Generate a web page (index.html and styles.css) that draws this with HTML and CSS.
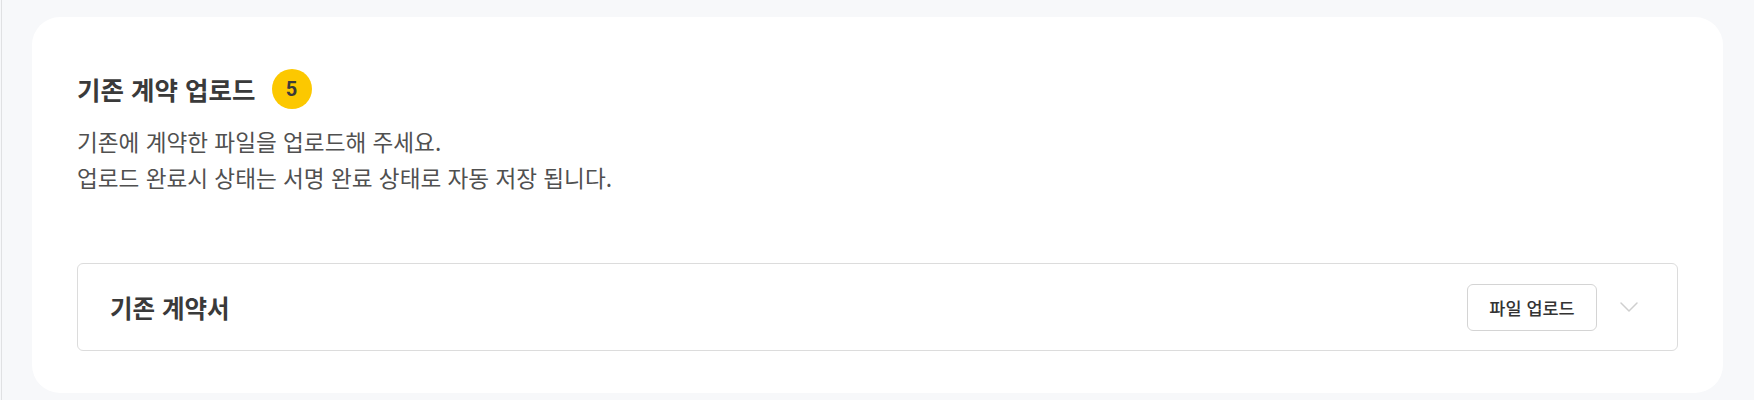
FILE: index.html
```html
<!DOCTYPE html>
<html lang="ko">
<head>
<meta charset="utf-8">
<title>기존 계약 업로드</title>
<link rel="stylesheet" href="styles.css">
</head>
<body>
<div class="page">
  <section class="card">
    <div class="title-row">
      <h2 class="title">기존 계약 업로드</h2>
      <span class="badge">5</span>
    </div>
    <p class="desc">기존에 계약한 파일을 업로드해 주세요.<br>업로드 완료시 상태는 서명 완료 상태로 자동 저장 됩니다.</p>
    <div class="panel">
      <div class="panel-title">기존 계약서</div>
      <div class="panel-actions">
        <button class="btn" type="button">파일 업로드</button>
        <span class="chevron">
          <svg width="20" height="12" viewBox="0 0 20 12"><path d="M2 2 L10 10 L18 2" fill="none" stroke="#cfcfcf" stroke-width="1.5" stroke-linecap="round" stroke-linejoin="round"/></svg>
        </span>
      </div>
    </div>
  </section>
</div>
</body>
</html>
```
FILE: styles.css
```css
* { box-sizing: border-box; }
html, body { margin: 0; padding: 0; }
body {
  background: #f7f8fa;
  font-family: "Noto Sans CJK KR", "Noto Sans", sans-serif;
  color: #333;
}
.page {
  margin-left: 1px;
  border-left: 1px solid #e0e1e3;
  min-height: 400px;
  padding: 17px 31px 7px 30px;
}
.card {
  background: #fff;
  border-radius: 28px;
  padding: 52px 45px 42px 45px;
}
.title-row {
  display: flex;
  align-items: center;
  height: 40px;
}
.title {
  margin: 0;
  font-size: 25.5px;
  font-weight: 700;
  color: #3a3a3a;
  line-height: 1;
}
.badge {
  margin-left: 16px;
  width: 40px;
  height: 40px;
  border-radius: 50%;
  background: #fcc800;
  color: #3a3a3a;
  font-family: "Roboto", "Noto Sans", sans-serif;
  font-weight: 700;
  font-size: 20px;
  display: flex;
  align-items: center;
  justify-content: center;
}
.desc {
  margin: 15px 0 0 0;
  font-size: 22.6px;
  line-height: 36px;
  color: #505050;
}
.panel {
  margin-top: 67px;
  height: 88px;
  border: 1px solid #dcdcdc;
  border-radius: 6px;
  display: flex;
  align-items: center;
  justify-content: space-between;
  padding: 0 36px 0 32px;
}
.panel-title {
  font-size: 24.5px;
  font-weight: 700;
  color: #3a3a3a;
}
.panel-actions {
  display: flex;
  align-items: center;
  gap: 20px;
}
.btn {
  width: 130px;
  height: 47px;
  border: 1px solid #d4d4d4;
  border-radius: 6px;
  background: #fff;
  font-family: "Noto Sans CJK KR", "Noto Sans", sans-serif;
  font-size: 17.5px;
  font-weight: 500;
  color: #333;
  padding: 0;
}
.chevron {
  width: 24px;
  height: 24px;
  display: flex;
  align-items: center;
  justify-content: center;
}
```
